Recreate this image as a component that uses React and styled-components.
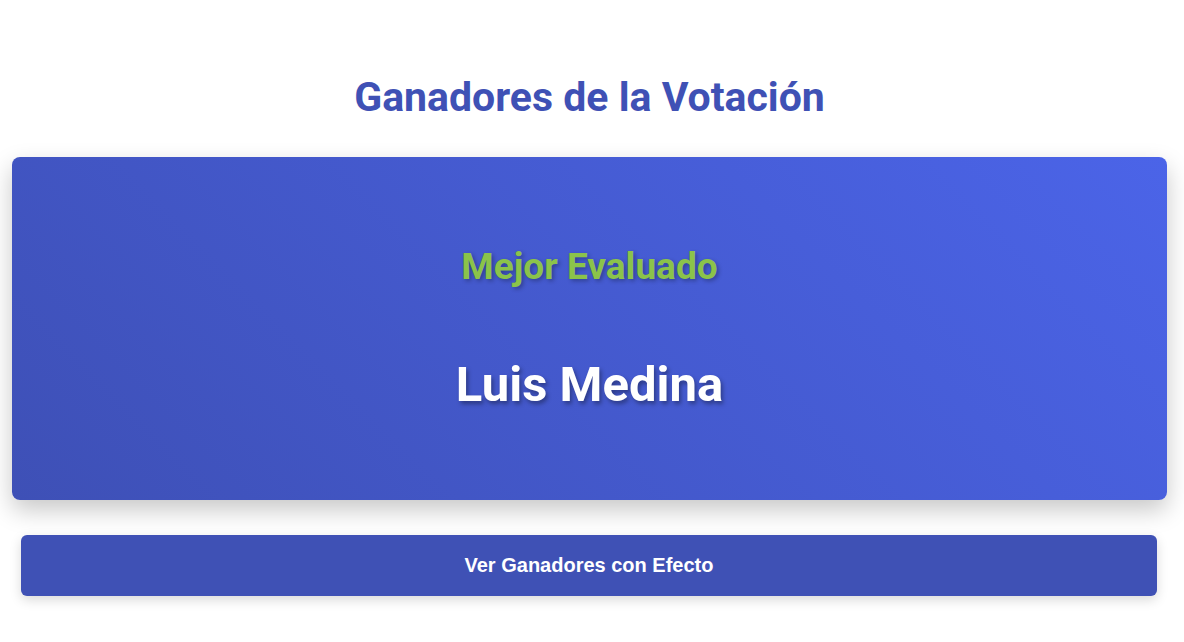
import React from "react";
import styled, { createGlobalStyle } from "styled-components";

const GlobalStyle = createGlobalStyle`
    body {
        margin: 0;
        background: #ffffff;
        font-family: Roboto, "Liberation Sans", Arial, sans-serif;
    }
`;

const Page = styled.div`
    padding: 72px 17px 40px 12px;
    display: flex;
    flex-direction: column;
    align-items: center;
`;

const Title = styled.h1`
    margin: 0 0 35px;
    font-size: 41px;
    font-weight: 700;
    color: #3f51b5;
    line-height: 50px;
`;

const WinnerCard = styled.div`
    align-self: stretch;
    height: 343px;
    border-radius: 8px;
    background: linear-gradient(45deg, #3e50b6 0%, #4b64e8 100%);
    box-shadow: 0 10px 25px rgba(0, 0, 0, 0.22);
    display: flex;
    flex-direction: column;
    align-items: center;
    justify-content: center;
    gap: 68px;
`;

const Category = styled.h2`
    margin: 0;
    font-size: 37px;
    line-height: 43px;
    font-weight: 700;
    color: #8bc34a;
    text-shadow: 2px 2px 4px rgba(0, 0, 0, 0.3);
`;

const Name = styled.div`
    font-size: 49px;
    line-height: 57px;
    font-weight: 700;
    color: #ffffff;
    text-shadow: 2px 3px 4px rgba(0, 0, 0, 0.35);
`;

const ActionButton = styled.button`
    margin: 35px 10px 0 9px;
    align-self: stretch;
    height: 61px;
    border: none;
    border-radius: 6px;
    background: #3f51b5;
    color: #ffffff;
    font-family: "Liberation Sans", Arial, sans-serif;
    font-size: 20px;
    font-weight: 700;
    box-shadow: 0 4px 12px rgba(0, 0, 0, 0.15);
    cursor: pointer;
`;

export default function App() {
    return (
        <>
            <GlobalStyle />
            <Page>
                <Title>Ganadores de la Votación</Title>
                <WinnerCard>
                    <Category>Mejor Evaluado</Category>
                    <Name>Luis Medina</Name>
                </WinnerCard>
                <ActionButton>Ver Ganadores con Efecto</ActionButton>
            </Page>
        </>
    );
}
